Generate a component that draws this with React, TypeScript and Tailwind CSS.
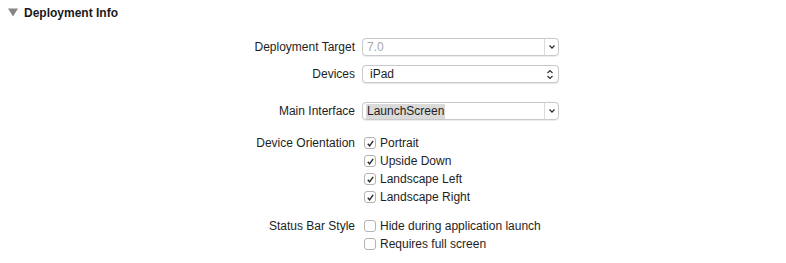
import React from 'react';

const font = { fontFamily: '"Liberation Sans", Arial, sans-serif' };

function Chevron({ double }: { double?: boolean }) {
  if (double) {
    return (
      <svg width="8" height="11" viewBox="0 0 8 11" className="text-[#333]">
        <path d="M1.5 4 L4 1.5 L6.5 4" fill="none" stroke="currentColor" strokeWidth="1.2" />
        <path d="M1.5 7 L4 9.5 L6.5 7" fill="none" stroke="currentColor" strokeWidth="1.2" />
      </svg>
    );
  }
  return (
    <svg width="8" height="6" viewBox="0 0 8 6" className="text-[#333]">
      <path d="M1.5 1.5 L4 4 L6.5 1.5" fill="none" stroke="currentColor" strokeWidth="1.3" />
    </svg>
  );
}

function Combo({ value, dim, highlight }: { value: string; dim?: boolean; highlight?: boolean }) {
  return (
    <div className="flex h-[18px] w-[197px] items-stretch rounded-[4px] border border-[#c9c9c9] bg-white shadow-[0_0.5px_1px_rgba(0,0,0,0.08)]">
      <div className="flex flex-1 items-center pl-[3px]">
        <span
          className={
            'px-[1px] text-[12px] leading-[15px] ' +
            (dim ? 'text-[#a8a8a8]' : 'text-[#1e1e1e]') +
            (highlight ? ' bg-[#dadada]' : '')
          }
        >
          {value}
        </span>
      </div>
      <div className="flex w-[14px] items-center justify-center border-l border-[#dcdcdc]">
        <Chevron />
      </div>
    </div>
  );
}

function Popup({ value }: { value: string }) {
  return (
    <div className="flex h-[18px] w-[197px] items-center justify-between rounded-[4px] border border-[#c9c9c9] bg-white pl-[7px] pr-[4px] shadow-[0_0.5px_1px_rgba(0,0,0,0.1)]">
      <span className="text-[12px] text-[#1e1e1e]">{value}</span>
      <Chevron double />
    </div>
  );
}

function Check({ label, checked }: { label: string; checked?: boolean }) {
  return (
    <div className="flex h-[18px] items-center pl-[2px]">
      <div className="mr-[4px] flex h-[12px] w-[12px] items-center justify-center rounded-[3px] border border-[#b3b3b3] bg-white">
        {checked && (
          <svg width="9" height="9" viewBox="0 0 9 9">
            <path d="M1.8 4.8 L3.6 6.8 L7.2 1.8" fill="none" stroke="#2a2a2a" strokeWidth="1.4" />
          </svg>
        )}
      </div>
      <span className="text-[12px] text-[#1e1e1e]">{label}</span>
    </div>
  );
}

function Row({ label, children, className }: { label: string; children: React.ReactNode; className?: string }) {
  return (
    <div className={'flex items-start ' + (className ?? '')}>
      <div className="flex h-[18px] w-[355px] items-center justify-end text-[12px] text-[#1e1e1e]">{label}</div>
      <div className="ml-[7px]">{children}</div>
    </div>
  );
}

export default function App() {
  return (
    <div className="h-[263px] w-[786px] bg-white" style={font}>
      <div className="flex h-[25px] items-center pl-[8px]">
        <svg width="10" height="9" viewBox="0 0 10 9" className="mr-[6px]">
          <path d="M0 0.5 H10 L5 8.5 Z" fill="#858585" />
        </svg>
        <span className="text-[12px] font-bold text-[#1a1a1a]">Deployment Info</span>
      </div>
      <Row label="Deployment Target" className="mt-[13px]">
        <Combo value="7.0" dim />
      </Row>
      <Row label="Devices" className="mt-[9px]">
        <Popup value="iPad" />
      </Row>
      <Row label="Main Interface" className="mt-[19px]">
        <Combo value="LaunchScreen" highlight />
      </Row>
      <Row label="Device Orientation" className="mt-[14px]">
        <div className="flex flex-col">
          <Check label="Portrait" checked />
          <Check label="Upside Down" checked />
          <Check label="Landscape Left" checked />
          <Check label="Landscape Right" checked />
        </div>
      </Row>
      <Row label="Status Bar Style" className="mt-[11px]">
        <div className="flex flex-col">
          <Check label="Hide during application launch" />
          <Check label="Requires full screen" />
        </div>
      </Row>
    </div>
  );
}
